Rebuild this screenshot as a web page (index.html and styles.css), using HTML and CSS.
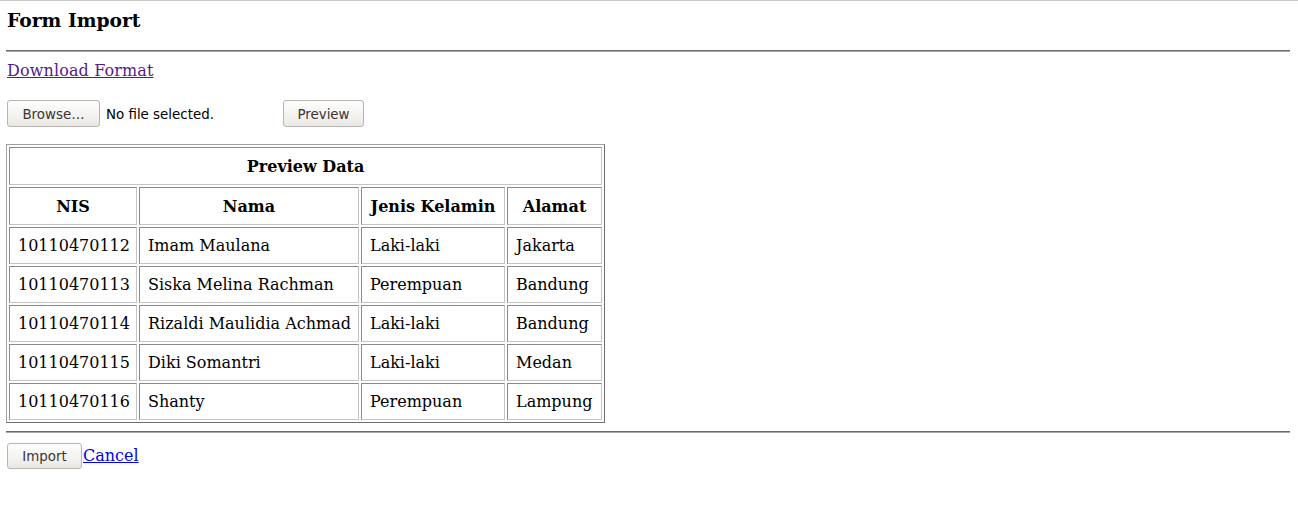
FILE: index.html
```html
<!DOCTYPE html>
<html>
<head>
<meta charset="utf-8">
<title>Form Import</title>
<link rel="stylesheet" href="styles.css">
</head>
<body>
<div class="page">
  <h3 class="title">Form Import</h3>
  <hr class="rule">
  <div class="download-row"><a class="link visited" href="#">Download Format</a></div>
  <div class="upload-row">
    <span class="btn browse">Browse…</span>
    <span class="file-label">No file selected.</span>
    <button class="btn preview" type="button">Preview</button>
  </div>
  <table class="data">
    <colgroup>
      <col class="c-nis">
      <col class="c-nama">
      <col class="c-jk">
      <col class="c-alamat">
    </colgroup>
    <tr class="head"><th colspan="4">Preview Data</th></tr>
    <tr class="head"><th>NIS</th><th>Nama</th><th>Jenis Kelamin</th><th>Alamat</th></tr>
    <tr><td>10110470112</td><td>Imam Maulana</td><td>Laki-laki</td><td>Jakarta</td></tr>
    <tr><td>10110470113</td><td>Siska Melina Rachman</td><td>Perempuan</td><td>Bandung</td></tr>
    <tr><td>10110470114</td><td>Rizaldi Maulidia Achmad</td><td>Laki-laki</td><td>Bandung</td></tr>
    <tr><td>10110470115</td><td>Diki Somantri</td><td>Laki-laki</td><td>Medan</td></tr>
    <tr><td>10110470116</td><td>Shanty</td><td>Perempuan</td><td>Lampung</td></tr>
  </table>
  <hr class="rule bottom-rule">
  <div class="actions"><button class="btn import" type="button">Import</button><a class="link" href="#">Cancel</a></div>
</div>
</body>
</html>
```
FILE: styles.css
```css
html, body {
  margin: 0;
  padding: 0;
  background: #ffffff;
}
body {
  font-family: "DejaVu Serif", serif;
  font-size: 16px;
  color: #000000;
}
.page {
  border-top: 1px solid #c8c8c8;
  padding: 8px 8px 0 6px;
}
.title {
  margin: 0 0 19px 1px;
  font-size: 18.72px;
  font-weight: bold;
  line-height: 22px;
}
.rule {
  margin: 0;
  height: 0;
  border: 0;
  border-top: 1px solid #6a6a6a;
  border-bottom: 1px solid #a8a8a8;
}
.download-row {
  margin: 9px 0 0 1px;
  line-height: 19px;
}
.link {
  color: #0000ee;
  text-decoration: underline;
}
.link.visited {
  color: #551a8b;
  letter-spacing: 0.12px;
}
.upload-row {
  display: flex;
  align-items: center;
  margin: 20px 0 0 1px;
  height: 27px;
}
.btn {
  box-sizing: border-box;
  display: inline-flex;
  align-items: center;
  justify-content: center;
  font-family: "DejaVu Sans", sans-serif;
  font-size: 13.4px;
  color: #3a3530;
  border: 1px solid #b8b6b2;
  border-radius: 3px;
  background: linear-gradient(#fdfdfd, #f5f4f2 50%, #ebe8e3);
  padding: 1px 0 0 0;
  margin: 0;
}
.browse {
  width: 93px;
  height: 27px;
}
.file-label {
  font-family: "DejaVu Sans", sans-serif;
  font-size: 13.4px;
  color: #000000;
  margin-left: 6px;
  padding-top: 1px;
  width: 177px;
}
.preview {
  width: 81px;
  height: 27px;
}
.data {
  margin-top: 17px;
  table-layout: fixed;
  width: 599px;
  border-collapse: separate;
  border-spacing: 2px;
  border: 1px solid;
  border-color: #a0a0a0 #6e6e6e #6e6e6e #a0a0a0;
}
.c-nis { width: 128px; }
.c-nama { width: 220px; }
.c-jk { width: 144px; }
.c-alamat { width: 95px; }
.data th, .data td {
  box-sizing: border-box;
  border: 1px solid;
  border-color: #8a8a8a #c4c4c4 #c4c4c4 #8a8a8a;
  padding: 8px 8px;
  line-height: 19px;
  white-space: nowrap;
  overflow: visible;
}
.data td {
  text-align: left;
}
.data th {
  text-align: center;
  font-weight: bold;
  padding-top: 9px;
}
.bottom-rule {
  margin-top: 8px;
}
.actions {
  display: flex;
  align-items: center;
  margin: 10px 0 0 1px;
}
.import {
  width: 75px;
  height: 26px;
}
.actions .link {
  margin-left: 1px;
  line-height: 19px;
  position: relative;
  top: -1px;
}
```
